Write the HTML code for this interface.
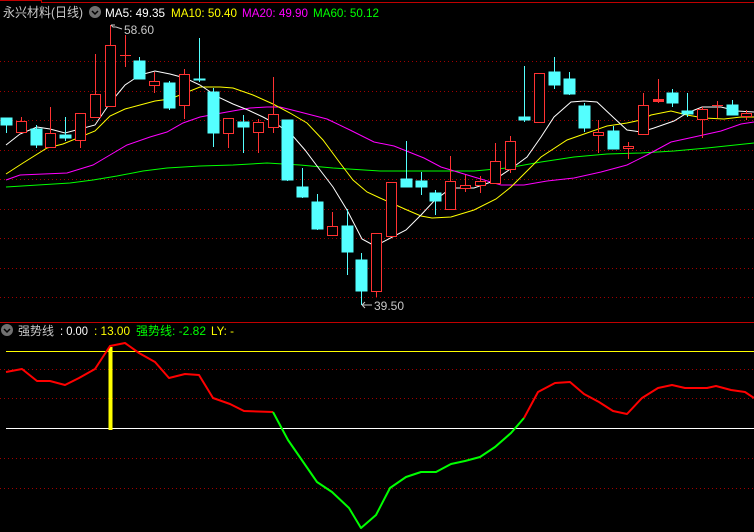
<!DOCTYPE html>
<html><head><meta charset="utf-8"><style>
html,body{margin:0;padding:0;background:#000;width:754px;height:532px;overflow:hidden}
svg{display:block}
text{font-family:"Liberation Sans","Noto Sans CJK SC",sans-serif;font-size:12px}
</style></head><body>
<svg width="754" height="532" viewBox="0 0 754 532" xmlns="http://www.w3.org/2000/svg">
<rect width="754" height="532" fill="#000"/>
<line x1="0" y1="0.5" x2="41" y2="0.5" stroke="#c00000"/>
<line x1="41.5" y1="0" x2="41.5" y2="3" stroke="#c00000"/>
<line x1="41" y1="2.5" x2="754" y2="2.5" stroke="#c00000"/>
<g stroke="#a00000" stroke-dasharray="1,3">
<line x1="0" y1="61.5" x2="754" y2="61.5"/><line x1="0" y1="91.5" x2="754" y2="91.5"/>
<line x1="0" y1="120.5" x2="754" y2="120.5"/><line x1="0" y1="150.5" x2="754" y2="150.5"/>
<line x1="0" y1="179.5" x2="754" y2="179.5"/><line x1="0" y1="209.5" x2="754" y2="209.5"/>
<line x1="0" y1="238.5" x2="754" y2="238.5"/><line x1="0" y1="268.5" x2="754" y2="268.5"/>
<line x1="0" y1="297.5" x2="754" y2="297.5"/>
<line x1="0" y1="369.5" x2="754" y2="369.5"/><line x1="0" y1="398.5" x2="754" y2="398.5"/>
<line x1="0" y1="458.5" x2="754" y2="458.5"/><line x1="0" y1="488.5" x2="754" y2="488.5"/>
</g>
<line x1="0" y1="322.5" x2="754" y2="322.5" stroke="#c00000"/>
<!-- header -->
<text x="3" y="17" fill="#c8c8c8" style="font-size:13px" textLength="80" lengthAdjust="spacingAndGlyphs">永兴材料(日线)</text>
<circle cx="95" cy="12" r="6" fill="#707070"/><path d="M92 11 L95 14 L98 11" stroke="#000" stroke-width="1.5" fill="none"/>
<text x="105" y="17" fill="#fff" textLength="60" lengthAdjust="spacingAndGlyphs">MA5: 49.35</text>
<text x="171" y="17" fill="#ffff00" textLength="66" lengthAdjust="spacingAndGlyphs">MA10: 50.40</text>
<text x="242" y="17" fill="#ff00ff" textLength="66" lengthAdjust="spacingAndGlyphs">MA20: 49.90</text>
<text x="313" y="17" fill="#00ff00" textLength="66" lengthAdjust="spacingAndGlyphs">MA60: 50.12</text>
<!-- MA lines -->
<g fill="none" stroke-width="1">
<polyline stroke="#00ff00" points="6,187 70,183 93,180 117,176 143,171 167,168 200,166 233,165 267,163 300,165 333,168 380,171 474,171 507,168 541,162 574,157 607,154 641,153 674,151 707,148 754,143"/>
<polyline stroke="#ff00ff" points="6,180 20,175 67,173 93,165 110,155 127,145 150,137 167,132 183,123 200,117 227,112 250,108 267,107 280,107 300,112 327,119 350,130 374,142 394,146 424,158 441,167 474,177 501,185 524,185 547,181 574,178 601,172 627,165 647,155 671,142 694,137 721,131 741,124 754,122"/>
<polyline stroke="#ffff00" points="6,174 23,163 47,148 63,144 95,131 110,116 125,109 140,105 155,101 170,99 185,93 200,87 220,87 233,88 253,95 273,104 290,113 307,123 323,140 340,163 353,180 367,192 380,198 407,210 421,216 432,218 451,217 474,210 496,199 511,187 527,171 541,157 567,140 587,133 607,126 627,123 641,120 651,115 671,111 687,115 704,118 724,119 741,117 754,117"/>
<polyline stroke="#ffffff" points="6,145 20,134 37,127 50,129 65,133 80,129 95,125 110,103 125,85 140,75 155,71 170,74 185,78 200,85 218,97 233,104 248,110 263,117 278,125 292,135 305,150 320,170 333,187 347,210 362,239 375,246 406,230 421,215 434,201 451,188 474,188 491,182 512,168 527,157 541,137 554,117 571,102 584,101 597,102 614,118 627,130 641,132 654,128 674,121 687,113 702,107 721,107 737,111 754,112"/>
</g>
<!-- candles -->
<g stroke-width="1">
<g stroke="#54ffff" fill="#54ffff">
<line x1="6.5" y1="118" x2="6.5" y2="133"/><rect x="1" y="118" width="11" height="7"/>
<line x1="36.5" y1="125" x2="36.5" y2="148"/><rect x="31" y="129" width="11" height="16"/>
<line x1="65.5" y1="117" x2="65.5" y2="141"/><rect x="60" y="135" width="11" height="3"/>
<line x1="139.5" y1="57" x2="139.5" y2="79"/><rect x="134" y="61" width="11" height="18"/>
<line x1="169.5" y1="81" x2="169.5" y2="110"/><rect x="164" y="83" width="11" height="25"/>
<line x1="199.5" y1="38" x2="199.5" y2="82"/><rect x="194" y="79" width="11" height="1"/>
<line x1="213.5" y1="88" x2="213.5" y2="147"/><rect x="208" y="92" width="11" height="41"/>
<line x1="243.5" y1="115" x2="243.5" y2="153"/><rect x="238" y="122" width="11" height="5"/>
<line x1="287.5" y1="120" x2="287.5" y2="181"/><rect x="282" y="120" width="11" height="60"/>
<line x1="302.5" y1="168" x2="302.5" y2="198"/><rect x="297" y="187" width="11" height="10"/>
<line x1="317.5" y1="194" x2="317.5" y2="230"/><rect x="312" y="202" width="11" height="27"/>
<line x1="347.5" y1="209" x2="347.5" y2="275"/><rect x="342" y="226" width="11" height="26"/>
<line x1="361.5" y1="253" x2="361.5" y2="305"/><rect x="356" y="260" width="11" height="31"/>
<line x1="406.5" y1="141" x2="406.5" y2="187"/><rect x="401" y="179" width="11" height="8"/>
<line x1="421.5" y1="172" x2="421.5" y2="195"/><rect x="416" y="181" width="11" height="6"/>
<line x1="435.5" y1="190" x2="435.5" y2="215"/><rect x="430" y="193" width="11" height="8"/>
<line x1="524.5" y1="66" x2="524.5" y2="122"/><rect x="519" y="117" width="11" height="3"/>
<line x1="554.5" y1="57" x2="554.5" y2="89"/><rect x="549" y="72" width="11" height="13"/>
<line x1="569.5" y1="72" x2="569.5" y2="95"/><rect x="564" y="79" width="11" height="15"/>
<line x1="584.5" y1="103" x2="584.5" y2="132"/><rect x="579" y="106" width="11" height="22"/>
<line x1="613.5" y1="126" x2="613.5" y2="149"/><rect x="608" y="131" width="11" height="18"/>
<line x1="672.5" y1="89" x2="672.5" y2="107"/><rect x="667" y="93" width="11" height="10"/>
<line x1="687.5" y1="93" x2="687.5" y2="117"/><rect x="682" y="111" width="11" height="3"/>
<line x1="732.5" y1="100" x2="732.5" y2="115"/><rect x="727" y="105" width="11" height="10"/>
</g>
<g stroke="#ff3232" fill="#000">
<line x1="21.5" y1="117" x2="21.5" y2="133"/><rect x="16.5" y="121.5" width="10" height="11"/>
<line x1="50.5" y1="107" x2="50.5" y2="148"/><rect x="45.5" y="133.5" width="10" height="14"/>
<line x1="80.5" y1="113" x2="80.5" y2="148"/><rect x="75.5" y="113.5" width="10" height="27"/>
<line x1="95.5" y1="54" x2="95.5" y2="118"/><rect x="90.5" y="94.5" width="10" height="23"/>
<line x1="110.5" y1="25" x2="110.5" y2="107"/><rect x="105.5" y="45.5" width="10" height="61"/>
<line x1="125.5" y1="35" x2="125.5" y2="67"/><line x1="120" y1="55.5" x2="131" y2="55.5"/>
<line x1="154.5" y1="72" x2="154.5" y2="93"/><rect x="149.5" y="81.5" width="10" height="4"/>
<line x1="184.5" y1="69" x2="184.5" y2="119"/><rect x="179.5" y="74.5" width="10" height="31"/>
<line x1="228.5" y1="118" x2="228.5" y2="148"/><rect x="223.5" y="118.5" width="10" height="15"/>
<line x1="258.5" y1="119" x2="258.5" y2="153"/><rect x="253.5" y="122.5" width="10" height="10"/>
<line x1="273.5" y1="77" x2="273.5" y2="133"/><rect x="268.5" y="114.5" width="10" height="13"/>
<line x1="332.5" y1="212" x2="332.5" y2="236"/><rect x="327.5" y="226.5" width="10" height="9"/>
<line x1="376.5" y1="233" x2="376.5" y2="297"/><rect x="371.5" y="233.5" width="10" height="58"/>
<rect x="386.5" y="182.5" width="10" height="54"/>
<line x1="450.5" y1="156" x2="450.5" y2="210"/><rect x="445.5" y="181.5" width="10" height="28"/>
<line x1="465.5" y1="175" x2="465.5" y2="192"/><rect x="460.5" y="185.5" width="10" height="3"/>
<line x1="480.5" y1="176" x2="480.5" y2="193"/><rect x="475.5" y="181.5" width="10" height="4"/>
<line x1="495.5" y1="143" x2="495.5" y2="184"/><rect x="490.5" y="161.5" width="10" height="22"/>
<line x1="510.5" y1="136" x2="510.5" y2="173"/><rect x="505.5" y="141.5" width="10" height="28"/>
<rect x="534.5" y="73.5" width="10" height="49"/>
<line x1="598.5" y1="120" x2="598.5" y2="153"/><rect x="593.5" y="132.5" width="10" height="3"/>
<line x1="628.5" y1="142" x2="628.5" y2="159"/><rect x="623.5" y="146.5" width="10" height="2"/>
<line x1="643.5" y1="93" x2="643.5" y2="135"/><rect x="638.5" y="105.5" width="10" height="29"/>
<line x1="658.5" y1="79" x2="658.5" y2="103"/><rect x="653" y="99" width="11" height="3" fill="#ff3232" stroke="none"/>
<line x1="702.5" y1="107" x2="702.5" y2="138"/><rect x="697.5" y="109.5" width="10" height="10"/>
<line x1="717.5" y1="101" x2="717.5" y2="118"/><line x1="712" y1="105.5" x2="723" y2="105.5"/>
<line x1="746.5" y1="110" x2="746.5" y2="120"/><rect x="741.5" y="113.5" width="10" height="3"/>
</g>
</g>
<!-- annotations -->
<path d="M111 25 L115 25 M111 25 L113 27 L116 27 L122 29" stroke="#c8c8c8" fill="none"/>
<text x="124" y="34" fill="#c8c8c8">58.60</text>
<path d="M362 305 L372 305 M362 305 L365 302 M362 305 L365 308" stroke="#c8c8c8" fill="none"/>
<text x="374" y="310" fill="#c8c8c8">39.50</text>
<!-- lower pane header -->
<circle cx="7" cy="330" r="6" fill="#707070"/><path d="M4 329 L7 332 L10 329" stroke="#000" stroke-width="1.5" fill="none"/>
<text x="18" y="335" fill="#c8c8c8" textLength="36" lengthAdjust="spacingAndGlyphs">强势线</text>
<text x="60" y="335" fill="#fff" textLength="28" lengthAdjust="spacingAndGlyphs">: 0.00</text>
<text x="94" y="335" fill="#ffff00" textLength="36" lengthAdjust="spacingAndGlyphs">: 13.00</text>
<text x="136" y="335" fill="#00ff00" textLength="70" lengthAdjust="spacingAndGlyphs">强势线: -2.82</text>
<text x="211" y="335" fill="#ffff00" textLength="23" lengthAdjust="spacingAndGlyphs">LY: -</text>
<!-- lower pane -->
<line x1="6" y1="351.5" x2="754" y2="351.5" stroke="#ffff00"/>
<line x1="6" y1="428.5" x2="754" y2="428.5" stroke="#ffffff"/>
<line x1="110.5" y1="347" x2="110.5" y2="430" stroke="#ffff00" stroke-width="4"/>
<g fill="none" stroke-width="2" stroke-linejoin="round">
<polyline stroke="#ff0000" points="6,372 22,369 37,381 50,381 65,385 79,378 95,369 110,346 125,343 139,353 155,362 169,378 185,374 199,375 213,398 230,404 244,411 273,412"/>
<polyline stroke="#00ff00" points="273,412 288,440 317,482 332,492 349,508 361,528 376,515 390,488 406,477 421,472 436,472 451,464 465,461 480,457 495,447 511,433 524,418"/>
<polyline stroke="#ff0000" points="524,418 538,392 555,383 570,382 584,394 599,402 613,411 627,414 642,398 658,388 672,385 685,388 707,388 716,386 731,390 745,392 754,398"/>
</g>
</svg>
</body></html>
